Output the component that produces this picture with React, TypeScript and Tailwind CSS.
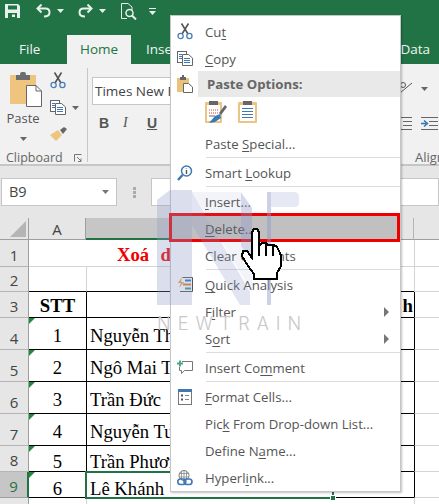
import React from "react";

const Scissors = () => (
  <svg width="16" height="17" viewBox="0 0 16 17" fill="none">
    <path d="M4.500 0.500 L11 11 M11.500 0.500 L5 11" stroke="#555" strokeWidth="1.600" />
    <circle cx="3.600" cy="13" r="2.600" stroke="#4a7db5" strokeWidth="1.300" />
    <circle cx="12.400" cy="13" r="2.600" stroke="#4a7db5" strokeWidth="1.300" />
  </svg>
);
const CopyIcon = () => (
  <svg width="16" height="15" viewBox="0 0 16 15" fill="none">
    <rect x="0.500" y="0.500" width="9" height="11" fill="#fff" stroke="#666" />
    <path d="M2 3.500H5M2 5.500H5M2 7.500H5" stroke="#3f78b5" />
    <path d="M5.500 3.500H11.500L15.500 7V14.500H5.500Z" fill="#fff" stroke="#666" />
    <path d="M7 7.500H13M7 9.500H13M7 11.500H13" stroke="#3f78b5" />
  </svg>
);
const PasteSmall = () => (
  <svg width="16" height="18" viewBox="0 0 16 18" fill="none">
    <rect x="0" y="3" width="12" height="14" fill="#eac27c" />
    <rect x="3" y="2" width="6" height="3" fill="#666" />
    <rect x="5" y="0" width="2" height="3" fill="#666" />
    <path d="M6.500 8.500H11.500L15.500 12V17.500H6.500Z" fill="#fff" stroke="#666" />
  </svg>
);
const PasteLarge = () => (
  <svg width="32" height="35" viewBox="0 0 32 35" fill="none">
    <rect x="0" y="3" width="26" height="29" rx="1" fill="#eec47f" />
    <rect x="6" y="3" width="14" height="5" fill="#6d6d6d" />
    <rect x="10" y="0" width="6" height="4" rx="2" fill="#6d6d6d" />
    <path d="M16.500 13.500H26L31.500 19V34.500H16.500Z" fill="#fff" stroke="#666" />
    <path d="M26 13.500V19H31.500" stroke="#666" />
  </svg>
);
const Brush = () => (
  <svg width="17" height="15" viewBox="0 0 17 15">
    <path d="M10 3 L14 0 L17 2 L13 7Z" fill="#666" />
    <path d="M0 8 L8 3 L12 8 L6 14Z" fill="#eec47f" />
  </svg>
);
const Caret = ({ color = "#666" }: { color?: string }) => (
  <svg width="7" height="4" viewBox="0 0 7 4"><path d="M0 0H7L3.500 4Z" fill={color} /></svg>
);
const SaveIcon = () => (
  <svg width="15" height="14" viewBox="0 0 15 14">
    <path fillRule="evenodd" d="M0 0H13L15 2V14H0ZM3 1.500V5.500H12V1.500ZM3 9V14H12V9ZM7 10.500H10V13H7Z" fill="#e9f1ec" />
  </svg>
);
const UndoIcon = ({ flip = false }: { flip?: boolean }) => (
  <svg width="15" height="14" viewBox="0 0 15 14" fill="none" className={flip ? "-scale-x-100" : ""}>
    <path d="M2 4.500H9.500C12 4.500 13.500 6 13.500 8.500C13.500 11 11.500 12.500 8 12.500" stroke="#e9f1ec" strokeWidth="2" />
    <path d="M5.500 0.500L1.500 4.500L5.500 8.500" stroke="#e9f1ec" strokeWidth="2" />
  </svg>
);
const PreviewIcon = () => (
  <svg width="16" height="17" viewBox="0 0 16 17" fill="none" stroke="#e9f1ec">
    <path d="M0.500 0.500H7L11 4V7M0.500 0.500V15.500H6" />
    <circle cx="8.500" cy="10" r="3.500" strokeWidth="1.500" />
    <path d="M11 12.500L15 16.500" strokeWidth="2" />
  </svg>
);
const CustomizeIcon = () => (
  <svg width="7" height="8" viewBox="0 0 7 8" fill="#e9f1ec">
    <rect x="0" y="0" width="7" height="1" />
    <path d="M0 3H7L3.500 7Z" />
  </svg>
);
const Launcher = () => (
  <svg width="8" height="8" viewBox="0 0 8 8" fill="none" stroke="#777">
    <path d="M0.500 7.500V0.500H7.500" />
    <path d="M3 3L7 7M7 4.500V7.500H4" />
  </svg>
);
const OrientIcon = () => (
  <svg width="14" height="13" viewBox="0 0 14 13" fill="none" stroke="#555">
    <path d="M1 11L13 1" />
    <circle cx="4" cy="3" r="2.500" />
  </svg>
);
const IndentIcon = ({ arrow }: { arrow: boolean }) => (
  <svg width="17" height="13" viewBox="0 0 17 13" fill="none">
    <path d="M0 0.500H17M8 4.500H17M8 8.500H17M0 12.500H17" stroke="#666" />
    {arrow && <path d="M0 6.500H5M3 3.500L6.500 6.500L3 9.500" stroke="#2f75b5" strokeWidth="1.500" />}
  </svg>
);
const PasteFormat = () => (
  <svg width="22" height="24" viewBox="0 0 22 24" fill="none">
    <rect x="0" y="2" width="17" height="21" rx="1" fill="#ecc586" />
    <rect x="2" y="5" width="13" height="16" fill="#fff" />
    <rect x="4" y="1" width="9" height="4" fill="#666" />
    <path d="M4 10H13M4 13H13" stroke="#d9402e" strokeDasharray="1 1" />
    <path d="M4 16H10" stroke="#666" />
    <path d="M14 13L20 5L22 7L16 15Z" fill="#666" />
    <path d="M4 23L10 16L15 14L16 18L10 22Z" fill="#3b78b8" />
  </svg>
);
const PasteValues = () => (
  <svg width="19" height="24" viewBox="0 0 19 24" fill="none">
    <rect x="0" y="2" width="19" height="21" rx="1" fill="#ecc586" />
    <rect x="2" y="5" width="15" height="16" fill="#fff" />
    <rect x="5" y="1" width="9" height="4" fill="#666" />
    <path d="M4 8.500H15M4 11.500H15M4 14.500H15M4 17.500H15" stroke="#3f78b5" />
  </svg>
);
const LookupIcon = () => (
  <svg width="16" height="16" viewBox="0 0 16 16" fill="none">
    <circle cx="9.500" cy="6" r="5" stroke="#3f78b5" strokeWidth="1.500" />
    <path d="M9.500 3V3.500M9.500 5V9" stroke="#555" strokeWidth="1.400" />
    <path d="M5.500 10L1 15" stroke="#3f78b5" strokeWidth="2.500" />
  </svg>
);
const QuickIcon = () => (
  <svg width="15" height="15" viewBox="0 0 15 15" fill="none">
    <path d="M4.500 0.500H14.500V14.500H2" stroke="#555" />
    <path d="M7 3.500H13" stroke="#2f75b5" strokeWidth="2" />
    <path d="M5 7.500H13" stroke="#e07b39" strokeWidth="2" />
    <path d="M7 11.500H13" stroke="#3f9b76" strokeWidth="2" />
    <path d="M4 0L0 6H3L1 11L6 5H3Z" fill="#e8a33d" />
  </svg>
);
const CommentIcon = () => (
  <svg width="16" height="15" viewBox="0 0 16 15" fill="none">
    <path d="M5 1.500H15.500V10.500H7.500L4.500 13.500V10.500H2.500V7" stroke="#777" />
    <path d="M0 3.500H6M3 0.500V6.500" stroke="#4ea58a" strokeWidth="2" />
  </svg>
);
const FormatIcon = () => (
  <svg width="14" height="16" viewBox="0 0 14 16" fill="none">
    <rect x="0.500" y="2.500" width="13" height="13" stroke="#777" />
    <rect x="0" y="0" width="14" height="3" fill="#3f78b5" />
    <path d="M3 6.500H5M3 10.500H5" stroke="#555" strokeWidth="2" />
    <path d="M7 6.500H11M7 10.500H11" stroke="#888" />
  </svg>
);
const LinkIcon = () => (
  <svg width="16" height="16" viewBox="0 0 16 16" fill="none">
    <circle cx="7" cy="5.500" r="5" stroke="#777" />
    <path d="M2 3.500H12M2 7H12M7 0.500V10M4.500 1V9M9.500 1V9" stroke="#888" strokeWidth="0.800" />
    <rect x="0.800" y="9" width="8" height="5.500" rx="2.700" stroke="#3f78b5" strokeWidth="1.600" fill="none" />
    <rect x="7" y="9" width="8" height="5.500" rx="2.700" stroke="#3f78b5" strokeWidth="1.600" fill="none" />
  </svg>
);

const U = ({ children }: { children: React.ReactNode }) => (
  <span className="underline underline-offset-2 decoration-[#555]">{children}</span>
);

const Sep = () => (
  <div className="h-[2px] pl-[35px]">
    <div className="h-px bg-[#dcdcdc]" />
  </div>
);

const Item = ({ icon, children, arrow }: { icon?: React.ReactNode; children: React.ReactNode; arrow?: boolean }) => (
  <div className="h-[27px] flex items-center">
    <div className="w-[27px] flex justify-center pl-[1px] shrink-0">{icon}</div>
    <div className="pl-[7px] pt-[2px] whitespace-nowrap">{children}</div>
    {arrow && (
      <div className="ml-auto mr-[11px] w-0 h-0 border-y-[5px] border-y-transparent border-l-[5px] border-l-[#777]" />
    )}
  </div>
);

const Menu = () => (
  <div className="absolute left-[170px] top-[15px] w-[231px] h-[477px] bg-white border border-[#c6c6c6] shadow-[1px_1px_2px_rgba(0,0,0,0.25)] pt-[2px] text-[13.200px] text-[#555] leading-none">
    <Item icon={<Scissors />}>Cu<U>t</U></Item>
    <Item icon={<CopyIcon />}><U>C</U>opy</Item>
    <div className="h-[26px] -mt-px flex items-center">
      <div className="w-[27px] flex justify-center pl-[1px] shrink-0"><PasteSmall /></div>
      <div className="flex-1 h-full bg-[#e9e9e9] flex items-center pl-[9px] pt-[2px] font-bold text-[#666]">Paste Options:</div>
    </div>
    <div className="h-[33px] flex items-start pl-[34px] pt-[3px] gap-[11px]">
      <PasteFormat />
      <PasteValues />
    </div>
    <Item>Paste <U>S</U>pecial...</Item>
    <Sep />
    <Item icon={<LookupIcon />}>Smart <U>L</U>ookup</Item>
    <Sep />
    <Item><U>I</U>nsert...</Item>
    <div className="relative h-[27px] bg-[#c0c0c0] flex items-center">
      <div className="pl-[34px] pt-[2px]"><U>D</U>elete...</div>
      <div className="absolute left-[-2px] right-0 top-[-2px] bottom-0 border-[3px] border-[#ee0000]" />
    </div>
    <Item>Clear Co<U>n</U>tents</Item>
    <Sep />
    <Item icon={<QuickIcon />}><U>Q</U>uick Analysis</Item>
    <Item arrow>F<U>i</U>lter</Item>
    <Item arrow>S<U>o</U>rt</Item>
    <Sep />
    <Item icon={<CommentIcon />}>Insert Co<U>m</U>ment</Item>
    <Sep />
    <Item icon={<FormatIcon />}><U>F</U>ormat Cells...</Item>
    <Item>Pic<U>k</U> From Drop-down List...</Item>
    <Item>Define N<U>a</U>me...</Item>
    <Item icon={<LinkIcon />}>Hyperl<U>i</U>nk...</Item>
  </div>
);

const Watermark = () => (
  <>
    <svg className="absolute left-0 top-0 pointer-events-none" width="439" height="504" viewBox="0 0 439 504">
      <path d="M157 200L170 190H192V305H157Z" fill="#8d98c8" opacity="0.32" />
      <path d="M192 192L250 292V305H240L192 225Z" fill="#8d98c8" opacity="0.25" />
      <path d="M192 192H240L252 208V292Z" fill="#8d98c8" opacity="0.1" />
      <path d="M241 192L252 208V262L241 246Z" fill="#8d98c8" opacity="0.3" />
      <path d="M267 192H271V305H267Z" fill="#8d98c8" opacity="0.45" />
      <path d="M271 192H294Q299 192 299 197V203Q299 207 294 207H271Z" fill="#8d98c8" opacity="0.22" />
    </svg>
    <div className="absolute left-[157px] top-[314px] text-[18px] leading-[20px] font-light tracking-[7px] text-[#c8c8c8] whitespace-nowrap font-['Inter',sans-serif]">NEWTRAIN</div>
  </>
);

const Hand = () => (
  <svg className="absolute left-[236px] top-[225px]" width="50" height="60" viewBox="236 225 50 60" shapeRendering="crispEdges">
    <path d="M252 232L254 229H257L259 232V246L262 243H266L268 245L270 245H274L277 247L280 253L281 256V266L277 273V279H254V274L248 266L242 256L243 251H247L252 258Z" fill="#fff" stroke="#000" strokeWidth="2" />
    <path d="M259 232V256M266 244V256M273 246V256" stroke="#000" strokeWidth="2" fill="none" />
  </svg>
);

const rows = [
  { n: "1", h: "h-[27px]" },
  { n: "2", h: "h-[25px]" },
  { n: "3", h: "h-[26px]" },
  { n: "4", h: "h-[32px]" },
  { n: "5", h: "h-[32px]" },
  { n: "6", h: "h-[32px]" },
  { n: "7", h: "h-[32px]" },
  { n: "8", h: "h-[26px]" },
  { n: "9", h: "h-[26px]" },
];
const people = [
  { n: "1", name: "Nguyễn Thị Hoa", h: "h-[32px]", pb: "pb-[5px]" },
  { n: "2", name: "Ngô Mai Trang", h: "h-[32px]", pb: "pb-[5px]" },
  { n: "3", name: "Trần Đức", h: "h-[32px]", pb: "pb-[5px]" },
  { n: "4", name: "Nguyễn Tuấn", h: "h-[32px]", pb: "pb-[5px]" },
  { n: "5", name: "Trần Phương", h: "h-[26px]", pb: "pb-[1px]" },
];

const RowHeaders = () => (
  <div className="w-[29px] shrink-0 flex flex-col">
    <div className="h-[22px] border-b border-r border-[#9f9f9f] bg-[#e6e6e6] flex items-end justify-end pr-[2px] pb-[2px]">
      <div className="w-[16px] h-[16px] bg-[#b5b5b5] [clip-path:polygon(100%_0,100%_100%,0_100%)]" />
    </div>
    {rows.map((r) => (
      <div
        key={r.n}
        className={`${r.h} flex items-end justify-center pb-[1px] border-b border-r text-[15px] leading-[20px] ${
          r.n === "9"
            ? "bg-[#c6c6c6] text-[#217346] border-r-[#217346] border-r-2 border-b-[#9f9f9f]"
            : "bg-[#e6e6e6] text-[#444] border-[#b5b5b5] border-r-[#9f9f9f]"
        }`}
      >
        {r.n}
      </div>
    ))}
    <div className="flex-1 bg-[#e6e6e6] border-r border-[#9f9f9f]" />
  </div>
);

const Tri = () => (
  <div className="absolute left-0 top-0 w-[6px] h-[6px] bg-[#1f8a3c] [clip-path:polygon(0_0,100%_0,0_100%)]" />
);

const DataRow = ({ n, name, h, pb }: { n: string; name: string; h: string; pb: string }) => (
  <div className={`${h} flex font-['Liberation_Serif',serif] text-[18.670px] text-black leading-[16px]`}>
    <div className={`relative w-[57px] shrink-0 border-b border-black flex items-end justify-center ${pb}`}>
      <Tri />
      {n}
    </div>
    <div className={`w-[328px] shrink-0 border-l border-black border-b flex items-end pl-[3px] whitespace-nowrap ${pb}`}>
      {name}
    </div>
    <div className="flex-1 border-l border-black border-b border-b-[#d4d4d4]" />
  </div>
);

const Sheet = () => (
  <div className="flex-1 flex bg-white min-h-0">
    <RowHeaders />
    <div className="flex-1 flex flex-col min-w-0">
      <div className="h-[22px] flex text-[15px] text-[#444] leading-[20px]">
        <div className="w-[57px] shrink-0 bg-[#e6e6e6] border-b border-r border-[#9f9f9f] flex items-center justify-center">A</div>
        <div className="w-[215px] shrink-0 bg-[#c6c6c6] border-b-2 border-[#217346]" />
        <div className="w-[113px] shrink-0 bg-[#e6e6e6] border-b border-[#9f9f9f] border-r border-r-[#b5b5b5]" />
        <div className="flex-1 bg-[#e6e6e6] border-b border-[#9f9f9f]" />
      </div>
      <div className="h-[27px] flex font-['Liberation_Serif',serif] font-bold text-[18.670px] text-[#f00000] leading-[22px]">
        <div className="w-[385px] shrink-0 border-b border-[#d4d4d4] flex items-end pl-[88px] whitespace-pre [word-spacing:1px]">Xoá  dữ liệu</div>
        <div className="flex-1 border-l border-[#d4d4d4] border-b" />
      </div>
      <div className="h-[25px] flex">
        <div className="w-[57px] shrink-0 border-b border-black" />
        <div className="w-[328px] shrink-0 border-l border-[#d4d4d4] border-b border-b-black" />
        <div className="flex-1 border-l border-[#d4d4d4] border-b" />
      </div>
      <div className="h-[26px] flex font-['Liberation_Serif',serif] font-bold text-[18.670px] text-black leading-[22px]">
        <div className="w-[57px] shrink-0 border-b border-black flex items-end justify-center">STT</div>
        <div className="w-[328px] shrink-0 border-l border-black border-b flex items-end justify-end pr-[1px]">h</div>
        <div className="flex-1 border-l border-black border-b border-b-[#d4d4d4]" />
      </div>
      {people.map((p) => (
        <DataRow key={p.n} n={p.n} name={p.name} h={p.h} pb={p.pb} />
      ))}
      <div className="h-[26px] flex font-['Liberation_Serif',serif] text-[18.670px] text-black leading-[16px]">
        <div className="relative w-[57px] shrink-0 border-b border-black flex items-end justify-center">
          <Tri />6
        </div>
        <div className="relative w-[328px] shrink-0 flex">
          <div className="w-[249px] shrink-0 border-2 border-[#217346] -mx-px -my-px flex items-end pl-[3px] whitespace-nowrap relative">
            Lê Khánh
            <div className="absolute right-[-4px] bottom-[-4px] w-[6px] h-[6px] bg-[#217346] border border-white" />
          </div>
          <div className="flex-1 border-b border-black" />
        </div>
        <div className="flex-1 border-l border-black border-b border-b-[#d4d4d4]" />
      </div>
      <div className="flex-1 flex">
        <div className="w-[57px] shrink-0" />
        <div className="w-[328px] shrink-0 border-l border-[#d4d4d4]" />
        <div className="flex-1 border-l border-[#d4d4d4]" />
      </div>
    </div>
  </div>
);

const Ribbon = () => (
  <div className="h-[102px] bg-[#f1f1f1] border-b-2 border-[#c6c6c6] flex text-[#555]">
    <div className="w-[88px] shrink-0 mt-[4px] mb-[2px] border-r border-[#c6c6c6] flex flex-col">
      <div className="flex-1 flex pt-[4px]">
        <div className="w-[46px] shrink-0 flex flex-col items-center pl-[6px]">
          <PasteLarge />
          <div className="text-[13px] leading-[18px] mt-[2px] -ml-[6px]">Paste</div>
          <div className="mt-[10px] -ml-[6px]"><Caret /></div>
        </div>
        <div className="flex flex-col pl-[4px]">
          <Scissors />
          <div className="flex items-center gap-[3px] mt-[11px]">
            <CopyIcon />
            <div className="ml-[3px]"><Caret /></div>
          </div>
          <div className="mt-[12px]"><Brush /></div>
        </div>
      </div>
      <div className="flex items-center justify-between pl-[6px] pr-[5px] -mb-[2px] text-[12.500px] leading-[12px] text-[#666]">
        Clipboard
        <Launcher />
      </div>
    </div>
    <div className="flex-1 flex flex-col pl-[4px] pt-[13px] min-w-0">
      <div className="w-[180px] h-[28px] bg-white border border-[#c6c6c6] flex items-center pl-[2px] text-[13.500px] text-[#444] whitespace-nowrap">Times New Roman</div>
      <div className="flex items-center gap-[17px] pl-[7px] mt-[9px] text-[14px] leading-[18px] text-[#555]">
        <span className="font-['Liberation_Sans',sans-serif] font-bold w-[7px]">B</span>
        <span className="font-['Liberation_Serif',serif] italic w-[7px]">I</span>
        <span className="font-['Liberation_Sans',sans-serif] underline font-bold w-[7px]">U</span>
        <Caret />
      </div>
    </div>
    <div className="w-[39px] shrink-0 flex flex-col pt-[18px] items-start">
      <div className="flex items-center gap-[8px] -ml-[1px]">
        <OrientIcon />
        <Caret />
      </div>
      <div className="flex gap-[9px] mt-[22px] -ml-[5px]">
        <IndentIcon arrow={false} />
        <IndentIcon arrow />
      </div>
      <div className="text-[13px] leading-[16px] mt-[19px] ml-[15px] text-[#666] whitespace-nowrap">Align</div>
    </div>
  </div>
);

export default function App() {
  return (
    <div className="relative w-[439px] h-[504px] overflow-hidden flex flex-col font-['Open_Sans',sans-serif] bg-white">
      <div className="h-[64px] shrink-0 bg-[#217346] flex flex-col">
        <div className="h-[35px] flex items-start pt-[4px] pl-[5px]">
          <SaveIcon />
          <div className="ml-[16px]"><UndoIcon /></div>
          <div className="ml-[6px] mt-[5px]"><Caret color="#e9f1ec" /></div>
          <div className="ml-[14px]"><UndoIcon flip /></div>
          <div className="ml-[6px] mt-[5px]"><Caret color="#e9f1ec" /></div>
          <div className="ml-[15px] -mt-[1px]"><PreviewIcon /></div>
          <div className="ml-[12px] mt-[4px]"><CustomizeIcon /></div>
        </div>
        <div className="flex-1 flex items-stretch text-[13.500px] text-[#f0f5f2] leading-none">
          <div className="w-[67px] flex items-center pl-[19px]">File</div>
          <div className="w-[64px] bg-[#f1f1f1] text-[#217346] flex items-center justify-center">Home</div>
          <div className="pl-[15px] flex items-center">Insert</div>
          <div className="ml-auto pr-[9px] flex items-center">Data</div>
        </div>
      </div>
      <Ribbon />
      <div className="h-[52px] shrink-0 bg-[#e6e6e6] flex items-start pt-[12px] pl-[1px]">
        <div className="w-[116px] h-[28px] bg-white border border-[#c6c6c6] flex items-center justify-between pl-[7px] pr-[7px] text-[14.500px] text-[#444]">
          B9
          <Caret color="#777" />
        </div>
        <div className="w-[3px] h-[11px] ml-[16px] mt-[9px] [background:repeating-linear-gradient(#aaa_0_3px,transparent_3px_4px)]" />
        <div className="flex-1 h-[28px] ml-[15px] bg-white border border-[#c6c6c6]" />
      </div>
      <Sheet />
      <Menu />
      <Watermark />
      <Hand />
    </div>
  );
}
